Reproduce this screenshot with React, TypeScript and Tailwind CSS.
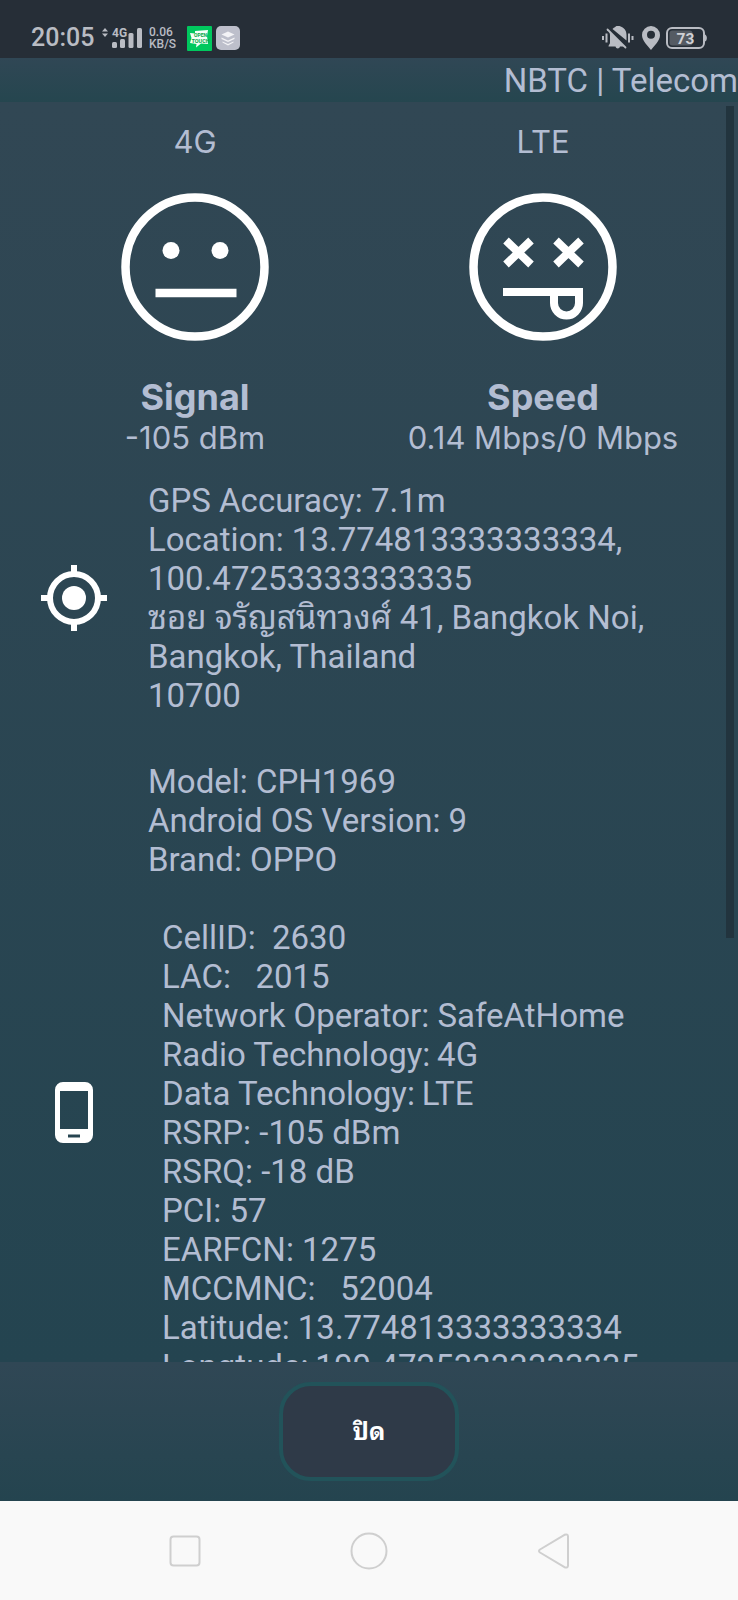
import type { ReactNode } from "react";

const deviceInfo = [
  "Model: CPH1969",
  "Android OS Version: 9",
  "Brand: OPPO",
];

const cellInfo = [
  "CellID:  2630",
  "LAC:   2015",
  "Network Operator: SafeAtHome",
  "Radio Technology:\u20094G",
  "Data Technology:\u2009LTE",
  "RSRP: -105 dBm",
  "RSRQ: -18 dB",
  "PCI: 57",
  "EARFCN: 1275",
  "MCCMNC:   52004",
  "Latitude: 13.774813333333334",
  "Longtude:\u2009100.47253333333335",
];

function StatusBar() {
  return (
    <div className="flex h-[58px] shrink-0 items-end justify-between bg-[#262e37] pr-[31px] pb-[7px] pl-[31px] text-[#b9bcc3]">
      <div className="flex items-center">
        <span className="w-[70px] text-[25px] leading-[26px] font-medium">20:05</span>
        <svg width="42" height="24" viewBox="0 0 42 24" fill="currentColor">
          <path d="M1 5.500 4 2l3 3.500zM1 7.500h6L4 11z" />
          <text x="11" y="11" fontSize="12" fontWeight="700">4G</text>
          <rect x="11" y="16" width="5" height="6" rx="1.500" />
          <rect x="19" y="13" width="5" height="9" rx="1.500" />
          <rect x="27.500" y="7" width="5" height="15" rx="1.500" />
          <rect x="36" y="2" width="5" height="20" rx="1.500" />
        </svg>
        <div className="w-[44px] pl-1.5 text-xs leading-3 font-medium">
          <div>0.06</div>
          <div>KB/S</div>
        </div>
        <svg width="25" height="25" viewBox="0 0 25 25">
          <rect width="25" height="25" rx="1" fill="#00c85e" />
          <path d="M3 7l5 .5V5l13-1-1 6 1 8-7-.5-5 4 .5-3.500L3 17l1.500-5z" fill="#f4fff8" />
          <text x="7" y="11" fontSize="5" fontWeight="700" fill="#06a547">OPEN</text>
          <text x="4.500" y="16.500" fontSize="5.500" fontWeight="700" fill="#06a547">TOUCH</text>
        </svg>
        <svg className="ml-1" width="25" height="25" viewBox="0 0 25 25">
          <rect width="24" height="24" rx="5" fill="#bdbfcb" />
          <path d="M12 5.500 18.500 8.500 12 11.500 5.500 8.500z" fill="#f3f3f6" />
          <path d="M5.500 11.500l6.500 3 6.500-3v1.500l-6.500 3-6.500-3zM6.500 15.500l5.500 2.500 5.500-2.500v1l-5.500 3-5.500-3z" fill="#f3f3f6" />
        </svg>
      </div>

      <div className="flex items-center">
        <svg width="32" height="26" viewBox="0 0 32 26" fill="currentColor">
          <path d="M0 11h2v4H0zM3.500 8.500h2v9h-2zM26 8.500h2v9h-2zM29.500 11h2v4h-2z" />
          <path d="M7.500 6.500 24 21.500h-6c-.5 2.500-4 2.500-4.500 0H6.500c0-2 1.500-2 1.500-4v-7c0-1.500-.5-2.500-.5-4z" />
          <path d="M10.500 4c2-2 3-2 4-3h3c5 1.500 7 5 7 9v5.500z" />
          <path d="M6.500 3.500 25 22" stroke="#262e37" strokeWidth="1.800" />
          <path d="M5.500 4.500 23.500 22.500" stroke="currentColor" strokeWidth="1.800" strokeLinecap="round" />
        </svg>
        <svg className="ml-2" width="18" height="26" viewBox="0 0 18 26" fill="currentColor">
          <path fillRule="evenodd" d="M9 1a9 9 0 0 1 9 9c0 6-6 11-9 15C6 21 0 16 0 10a9 9 0 0 1 9-9zm0 4.800a4 4 0 1 0 0 8 4 4 0 0 0 0-8z" />
        </svg>
        <svg className="ml-1.5" width="41" height="24" viewBox="0 0 41 24">
          <rect x="1" y="2" width="37" height="20" rx="5" fill="none" stroke="#b9bcc3" strokeWidth="2" />
          <rect x="3.500" y="4.500" width="23" height="15" rx="3" fill="#555b63" />
          <path d="M39 8.500c2.500 1 2.500 6 0 7z" fill="#b9bcc3" />
          <text x="19.500" y="17.500" fontSize="15.500" fontWeight="700" textAnchor="middle" fill="#d0d1d5">73</text>
        </svg>
      </div>
    </div>
  );
}

function NeutralFace() {
  return (
    <svg width="148" height="148" viewBox="0 0 148 148" fill="none" stroke="#fff" strokeWidth="8.500">
      <circle cx="74" cy="74" r="69.500" />
      <path d="M34.500 100h81" />
      <circle cx="50" cy="57.500" r="8.500" fill="#fff" stroke="none" />
      <circle cx="99" cy="57.500" r="8.500" fill="#fff" stroke="none" />
    </svg>
  );
}

function DizzyFace() {
  return (
    <svg width="148" height="148" viewBox="0 0 148 148" fill="none" stroke="#fff">
      <circle cx="74" cy="74" r="69.500" strokeWidth="8.500" />
      <path d="M37 47.500l25 24M62 47.500l-25 24M87 47.500l25 24M112 47.500l-25 24" strokeWidth="8" />
      <path d="M34 99h76v11a12.500 12.500 0 0 1-25 0v-11" strokeWidth="8" />
    </svg>
  );
}

interface GaugeProps {
  network: string;
  title: string;
  value: string;
  children: ReactNode;
}

function Gauge({ network, title, value, children }: GaugeProps) {
  return (
    <div className="flex flex-col items-center font-['Inter',sans-serif] text-[31px] leading-9">
      <div>{network}</div>
      <div className="my-[33px]">{children}</div>
      <h2 className="text-4xl leading-[46px] font-bold">{title}</h2>
      <div className="whitespace-nowrap">{value}</div>
    </div>
  );
}

function InfoRow({ icon, children }: { icon: ReactNode; children: ReactNode }) {
  return (
    <section className="flex items-center">
      <div className="flex w-[148px] shrink-0 justify-center">{icon}</div>
      <div className="min-w-0 flex-1">{children}</div>
    </section>
  );
}

export default function App() {
  return (
    <div className="flex h-screen flex-col overflow-hidden bg-[#264550] font-['Roboto','Noto_Sans_Thai_Looped','Noto_Looped_Thai','Loma','Waree','Garuda','Noto_Serif_Thai',sans-serif] text-[#b3bdd2]">
      <StatusBar />

      <header className="flex h-11 shrink-0 items-center justify-end overflow-hidden bg-linear-to-b from-[#304755] to-[#25464f]">
        <h1 className="text-[33px] leading-[39px] whitespace-nowrap">NBTC | Telecom</h1>
      </header>

      <div className="relative min-h-0 flex-1">
        <main className="h-full overflow-y-auto bg-linear-to-b from-[#314754] to-[#244450] text-[33px] leading-[39px] [scrollbar-width:none]">
          <div className="grid grid-cols-2 px-[21px] pt-[22px]">
            <Gauge network="4G" title="Signal" value="-105 dBm">
              <NeutralFace />
            </Gauge>
            <Gauge network="LTE" title="Speed" value="0.14 Mbps/0 Mbps">
              <DizzyFace />
            </Gauge>
          </div>

          <div className="mt-[25px] flex flex-col gap-[47px] pr-[21px]">
            <InfoRow
              icon={
                <svg width="66" height="66" viewBox="0 0 66 66" fill="none" stroke="#fff" strokeWidth="6">
                  <circle cx="33" cy="33" r="24" />
                  <circle cx="33" cy="33" r="12" fill="#fff" stroke="none" />
                  <path d="M33 0v8M33 58v8M0 33h8M58 33h8" />
                </svg>
              }
            >
              <p>GPS Accuracy: 7.1m</p>
              <p>Location: 13.774813333333334, 100.47253333333335</p>
              <p>
                ซอย จรัญสนิทวงศ์ 41, Bangkok Noi, Bangkok, Thailand
                <br />
                10700
              </p>
            </InfoRow>

            <InfoRow
              icon={
                <svg width="40" height="62" viewBox="0 0 40 62">
                  <path
                    fill="#fff"
                    fillRule="evenodd"
                    d="M9 0h22a8 8 0 0 1 8 8v45a8 8 0 0 1-8 8H9a8 8 0 0 1-8-8V8a8 8 0 0 1 8-8zM6 9v38h28V9zM14 52.500v3h12v-3z"
                  />
                </svg>
              }
            >
              {deviceInfo.map((line) => (
                <p key={line}>{line}</p>
              ))}
              <div className="mt-[39px] pb-[78px] pl-3.5 whitespace-pre">
                {cellInfo.map((line) => (
                  <p key={line}>{line}</p>
                ))}
              </div>
            </InfoRow>
          </div>
        </main>

        {/* Scroll thumb */}
        <div className="absolute top-1 right-1 h-[66%] w-2 bg-[#22343e]" />
      </div>

      <footer className="flex shrink-0 justify-center bg-linear-to-b from-[#304755] to-[#24444f] py-5">
        <button
          type="button"
          className="h-[99px] w-[180px] rounded-[32px] border-4 border-[#22535a] bg-[#2f3a48] text-2xl font-bold text-white"
        >
          ปิด
        </button>
      </footer>

      <nav className="grid h-[99px] shrink-0 grid-cols-3 items-center bg-[#f9f9f9] px-[12.5%]">
        <button type="button" aria-label="Recent apps" className="flex justify-center">
          <svg width="38" height="38" viewBox="0 0 38 38" fill="none" stroke="#cfcfcf" strokeWidth="2">
            <rect x="4.500" y="4.500" width="29" height="29" rx="3" />
          </svg>
        </button>
        <button type="button" aria-label="Home" className="flex justify-center">
          <svg width="38" height="38" viewBox="0 0 38 38" fill="none" stroke="#cfcfcf" strokeWidth="2">
            <circle cx="19" cy="19" r="17.500" />
          </svg>
        </button>
        <button type="button" aria-label="Back" className="flex justify-center">
          <svg width="38" height="38" viewBox="0 0 38 38" fill="none" stroke="#cfcfcf" strokeWidth="2" strokeLinejoin="round">
            <path d="M5 17.500 29.500 2.800Q33 1.500 33 4.500v29q0 3-3.500 1.700L5 20.500q-2-1.500 0-3z" />
          </svg>
        </button>
      </nav>
    </div>
  );
}
